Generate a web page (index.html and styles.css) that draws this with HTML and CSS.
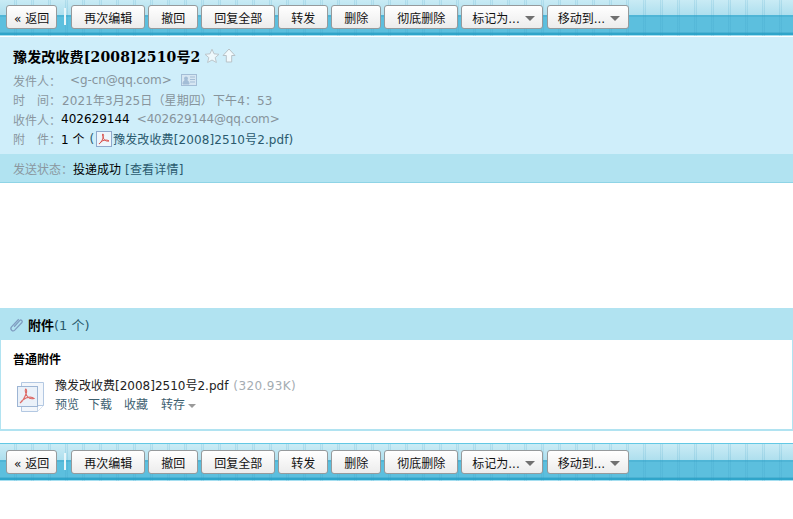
FILE: index.html
```html
<!DOCTYPE html>
<html lang="zh-CN">
<head>
<meta charset="UTF-8">
<title>豫发改收费[2008]2510号2</title>
<link rel="stylesheet" href="styles.css">
</head>
<body>

<div class="toolbar toolbar-top">
    <button class="btn btn-back">« 返回</button>
    <span class="sep"></span>
    <button class="btn">再次编辑</button>
    <button class="btn">撤回</button>
    <button class="btn">回复全部</button>
    <button class="btn">转发</button>
    <button class="btn">删除</button>
    <button class="btn">彻底删除</button>
    <button class="btn btn-menu">标记为...<i class="caret"></i></button>
    <button class="btn btn-menu">移动到...<i class="caret"></i></button>
</div>

<div class="head">
    <div class="subject">
        <span>豫发改收费[2008]2510号2</span>
        <svg class="ico-star" width="16" height="16" viewBox="0 0 16 16"><path d="M8 1.200l2 4.600 5 .5-3.800 3.300 1.200 4.900L8 12l-4.400 2.500 1.200-4.900L1 6.300l5-.5z" fill="#eef8fc" stroke="#bcc6cb"/></svg>
        <svg class="ico-up" width="14" height="15" viewBox="0 0 14 15"><path d="M7 1l6 6.500H9.700V14H4.300V7.500H1z" fill="#f2fafd" stroke="#b8c2c7"/></svg>
    </div>
    <div class="row">
        <span class="label">发件人：</span><span class="addr addr-from">&lt;g-cn@qq.com&gt;</span>
        <svg class="ico-card" width="16" height="12" viewBox="0 0 16 12"><rect x=".5" y=".5" width="15" height="11" fill="#d6e6f2" stroke="#a3bdd6"/><circle cx="5" cy="4.500" r="2" fill="#a3bdd6"/><path d="M2 10c0-5 6-5 6 0zM9 3h5M9 5.500h5M9 8h5" fill="#a3bdd6" stroke="#a3bdd6"/></svg>
    </div>
    <div class="row"><span class="label">时　间：</span><span class="addr addr-time">2021年3月25日（星期四）下午4：53</span></div>
    <div class="row"><span class="label">收件人：</span><span class="name">402629144</span><span class="addr addr-to">&lt;402629144@qq.com&gt;</span></div>
    <div class="row">
        <span class="label">附　件：</span><span class="name">1 个</span><span class="link paren">(</span>
        <svg class="ico-pdf" width="16" height="16" viewBox="0 0 16 16"><rect x=".5" y=".5" width="15" height="15" fill="#eef5fb" stroke="#8fa9cc"/><path d="M3 13c2-1 3.500-4 4.500-7.500.3-1.500-.2-3-.8-2.500-.6 1 .3 4 1.500 5.500 1 1.300 3 2 4.800 1.500-1-1-3.500-1.300-6-.4C6 10 4 11.500 3 13z" fill="none" stroke="#d9534f"/></svg><span class="link file-link">豫发改收费[2008]2510号2.pdf)</span>
    </div>
</div>

<div class="status"><span class="label">发送状态：</span><span class="name">投递成功</span><span class="link detail">[查看详情]</span></div>

<div class="content"></div>

<div class="att-head">
    <svg class="ico-clip" width="16" height="16" viewBox="0 0 14 14"><path d="M4.500 8.500l5-5.500c1-1 2.800.6 1.800 1.800L5 11.500c-1.700 1.700-4.500-.7-2.800-2.800L8.500 2" fill="none" stroke="#7f9cc0" stroke-width="1.100"/></svg>
    <b>附件</b><span class="link">(1 个)</span>
</div>
<div class="att-body">
    <div class="att-title">普通附件</div>
    <div class="att-item">
        <svg class="ico-file" width="30" height="32" viewBox="0 0 30 32"><path d="M5.500 1.500h22v23l-6 6h-16z" fill="#f2f6fb" stroke="#b3c8e2"/><path d="M21.500 30.500c0-3 0-6 .5-6h5.500" fill="#fff" stroke="#b3c8e2"/><rect x="1.500" y="5.500" width="20" height="20" fill="#eaf1f9" stroke="#9db5d4"/><path d="M4 22c3-2 5-6 6.500-10.500.4-2-.3-4-1-3.300-.8 1.300.4 5.300 2 7.300 1.400 1.800 4 2.700 6.500 2-1.400-1.300-4.700-1.800-8-.5C8 18 5.500 20 4 22z" fill="none" stroke="#dd6a66" stroke-width="1.100"/></svg>
        <div>
            <div class="att-name">豫发改收费[2008]2510号2.pdf<span class="size">(320.93K)</span></div>
            <div class="att-ops"><a>预览</a><a>下载</a><a>收藏</a><a>转存<i class="caret caret-small"></i></a></div>
        </div>
    </div>
</div>

<div class="toolbar toolbar-bottom">
    <button class="btn btn-back">« 返回</button>
    <span class="sep"></span>
    <button class="btn">再次编辑</button>
    <button class="btn">撤回</button>
    <button class="btn">回复全部</button>
    <button class="btn">转发</button>
    <button class="btn">删除</button>
    <button class="btn">彻底删除</button>
    <button class="btn btn-menu">标记为...<i class="caret"></i></button>
    <button class="btn btn-menu">移动到...<i class="caret"></i></button>
</div>

</body>
</html>
```

FILE: styles.css
```css
html, body {
    margin: 0;
    padding: 0;
    background: #fff;
    overflow: hidden;
}
body {
    font-family: "DejaVu Sans", "Noto Sans CJK SC", sans-serif;
    font-size: 12px;
    color: #000;
}
svg { flex: none; }

.toolbar {
    display: flex;
    align-items: flex-start;
    gap: 3px;
    box-sizing: border-box;
    padding-left: 6px;
    background-color: #c9ebf5;
    background-repeat: repeat, no-repeat;
    background-size: auto, 100% 36px;
    background-image:
        repeating-linear-gradient(90deg, transparent 0 14px, rgba(50,150,190,.16) 14px 15px, rgba(50,150,190,.04) 15px 16px, rgba(50,150,190,.16) 16px 17px),
        linear-gradient(#c9ebf5 0, #aedfee 15px, #4fb5d6 15px, #4fb5d6 17px, #5cbfde 17px, #5cbfde 32px, #4cb2d3 32px, #4cb2d3 33px, #2fa5ca 33px, #2fa5ca 35px, #a5def0 35px);
}
.toolbar-top {
    height: 37px;
    padding-top: 5px;
    border-bottom: 1px solid #fff;
}
.toolbar-bottom {
    height: 38px;
    padding-top: 6px;
    margin-top: 12px;
    border-top: 1px solid #62c8e4;
    background-position: 0 0, 0 1px;
}

.btn {
    height: 24px;
    padding: 0 12px;
    font: inherit;
    color: #111;
    border: 1px solid #969a9c;
    border-radius: 3px;
    background: linear-gradient(#fff, #ececec);
    white-space: nowrap;
}
.btn-back { padding: 0 7px; }
.btn-menu {
    padding-right: 7px;
    padding-left: 10px;
}
.btn-menu:last-child {
    margin-left: 1px;
    padding-right: 8px;
}
.sep {
    width: 2px;
    height: 17px;
    margin: 3px 2px 0 4px;
    background: #e8f6fa;
}
.caret {
    display: inline-block;
    margin-left: 5px;
    vertical-align: 2px;
    border: 5px solid transparent;
    border-top-color: #707070;
    border-bottom: 0;
}
.caret-small {
    margin-left: 3px;
    vertical-align: 1px;
    border-width: 4px;
    border-bottom: 0;
    border-top-color: #9a9a9a;
}

.head {
    box-sizing: border-box;
    height: 117px;
    padding: 8px 13px 0;
    background: #cfeefa;
}
.subject {
    display: flex;
    align-items: center;
    height: 21px;
    margin-bottom: 4.300px;
    font-size: 14px;
    font-weight: bold;
    font-family: "DejaVu Serif", "Noto Sans CJK SC", serif;
    letter-spacing: .15px;
}
.ico-star { margin-left: 4px; }
.ico-up { margin-left: 2px; }
.row {
    display: flex;
    align-items: center;
    height: 19.6px;
    white-space: pre;
}
.label { color: #8a979f; }
.addr { color: #87949c; }
.addr-from { margin-left: 9px; letter-spacing: -.1px; }
.addr-time { margin-left: 1px; letter-spacing: .1px; }
.addr-to { margin-left: 7px; letter-spacing: -.15px; }
.name { color: #000; }
.link { color: #2a5a6e; }
.paren { margin-left: 5px; }
.file-link { letter-spacing: .1px; }
.detail { margin-left: 4px; letter-spacing: .2px; }
.ico-card { margin-left: 9px; }
.ico-pdf { margin: 0 1px 0 2px; }

.status {
    box-sizing: border-box;
    height: 29px;
    padding: 8px 13px 0;
    line-height: 17px;
    background: #b1e3f1;
    border-bottom: 1px solid #8fd4e6;
}
.content { height: 125px; }

.att-head {
    display: flex;
    align-items: center;
    height: 32px;
    padding: 1px 0 0 9px;
    box-sizing: border-box;
    background: #b1e3f1;
    font-size: 13px;
}
.att-head b { margin-left: 3px; }
.att-body {
    box-sizing: border-box;
    height: 91px;
    padding: 12px 12px 0;
    border: solid #b1e3f1;
    border-width: 0 1px 2px;
}
.att-title {
    font-weight: bold;
    line-height: 17px;
}
.att-item {
    display: flex;
    gap: 9px;
    margin-top: 8px;
    padding-left: 3px;
}
.ico-file { margin-top: 4px; }
.att-name { line-height: 18px; color: #222; }
.size { margin-left: 5px; color: #a4acb2; letter-spacing: .4px; }
.att-ops {
    display: flex;
    gap: 12px;
    margin-top: 1px;
    line-height: 18px;
    color: #3d6070;
}
.att-ops a:first-child { margin-right: -3px; }
.att-ops a:last-child { margin-left: 1px; }
```
